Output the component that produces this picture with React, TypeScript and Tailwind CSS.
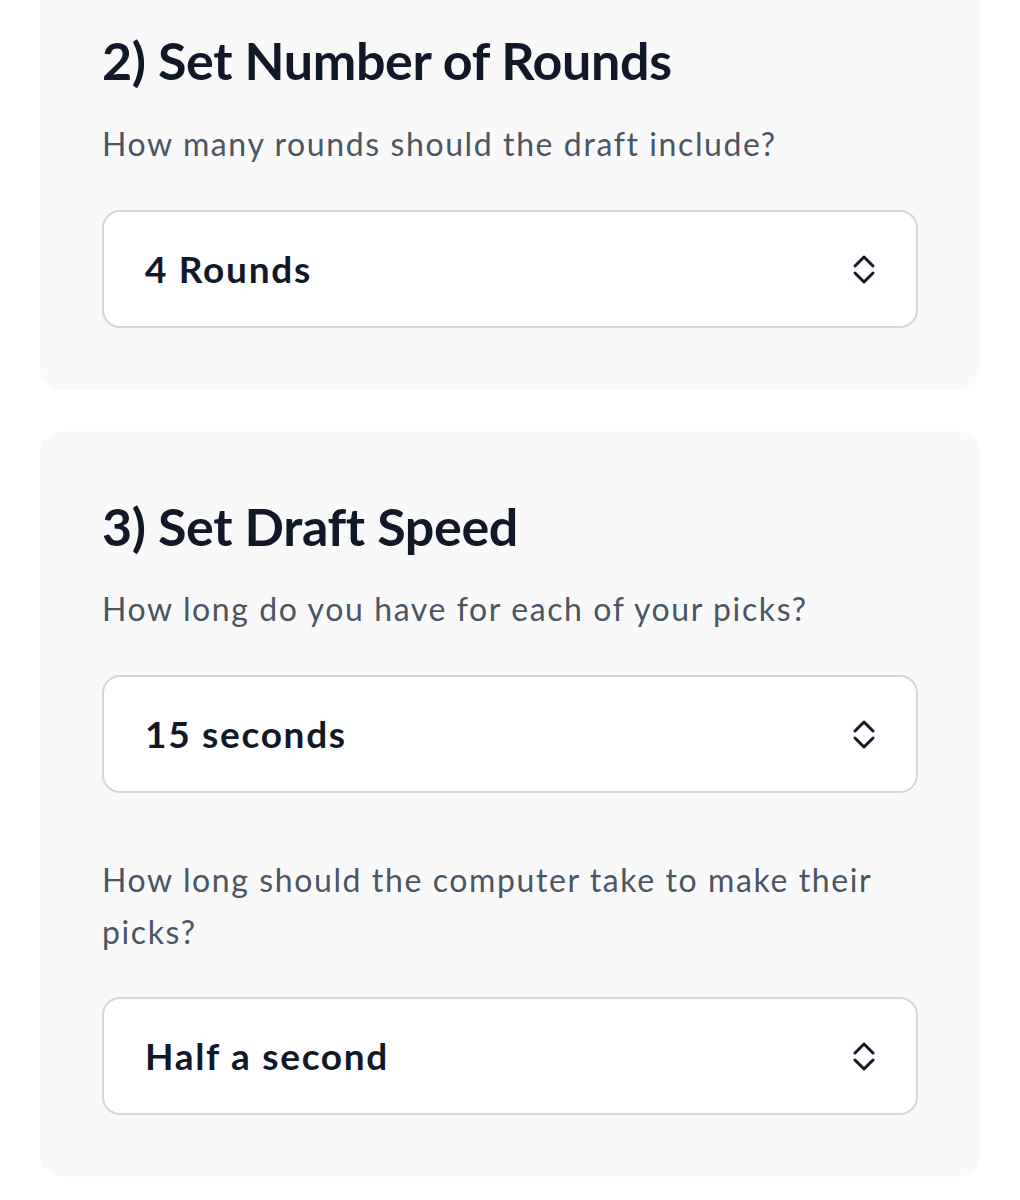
import React from 'react';

function UpDownIcon() {
  return (
    <svg width="24" height="32" viewBox="0 0 24 32" fill="none" stroke="#111827" strokeWidth="3" strokeLinecap="round" strokeLinejoin="round">
      <path d="M3 13 12 4l9 9" />
      <path d="M3 20l9 9 9-9" />
    </svg>
  );
}

function SelectBox({ value }: { value: string }) {
  return (
    <div className="flex h-[118px] items-center justify-between rounded-[18px] border-2 border-[#d4d6dd] bg-white pl-[41px] pr-[40px]">
      <span className="text-[37px] font-bold tracking-[1.7px] text-[#111827]">{value}</span>
      <UpDownIcon />
    </div>
  );
}

function Card({ title, children, className = '' }: { title: string; children: React.ReactNode; className?: string }) {
  return (
    <section className={`rounded-[22px] bg-[#f9f9fa] px-[62px] pt-[62px] pb-[62px] ${className}`}>
      <h2 className="text-[52px] leading-[66px] font-bold tracking-[-0.35px] text-[#111827]">{title}</h2>
      {children}
    </section>
  );
}

function Prompt({ children, className = '' }: { children: React.ReactNode; className?: string }) {
  return <p className={`text-[32px] leading-[52px] tracking-[1.6px] text-[#4b5563] ${className}`}>{children}</p>;
}

export default function App() {
  return (
    <div className="min-h-[1200px] bg-white px-10" style={{ fontFamily: 'Lato, "Noto Sans", sans-serif' }}>
      <div className="flex flex-col gap-[41px]">
        <Card title="2) Set Number of Rounds" className="-mt-[35px]">
          <Prompt className="mt-[25px] mb-[40px]">How many rounds should the draft include?</Prompt>
          <SelectBox value="4 Rounds" />
        </Card>
        <Card title="3) Set Draft Speed">
          <Prompt className="mt-[24px] mb-[40px]">How long do you have for each of your picks?</Prompt>
          <SelectBox value="15 seconds" />
          <Prompt className="mt-[61px] mb-[39px]">How long should the computer take to make their picks?</Prompt>
          <SelectBox value="Half a second" />
        </Card>
      </div>
    </div>
  );
}
